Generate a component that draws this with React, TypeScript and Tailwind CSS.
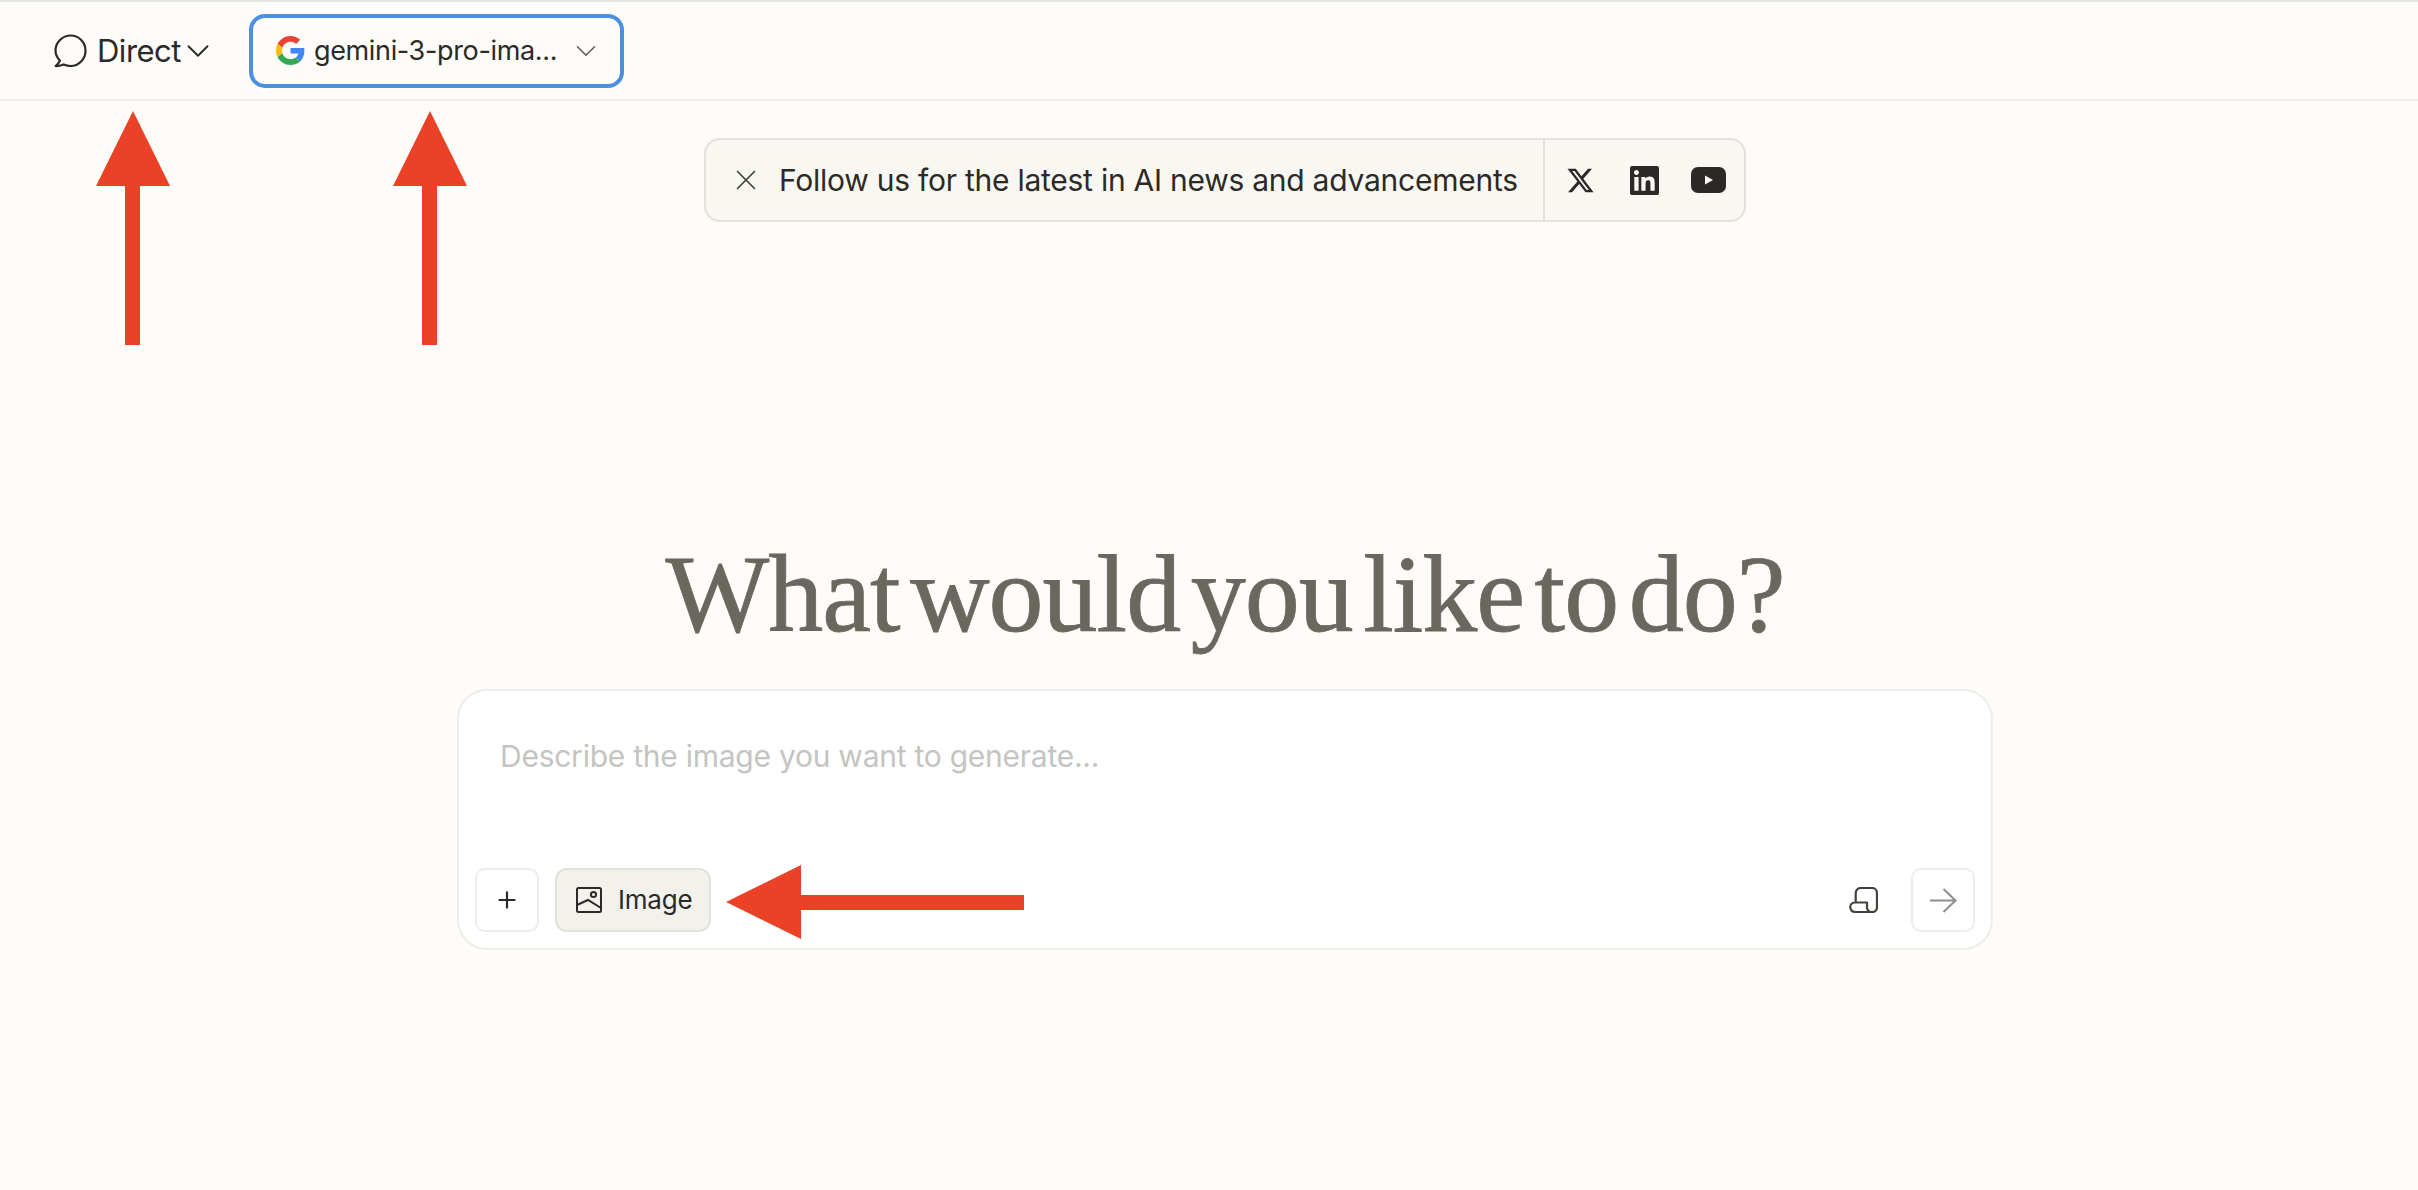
import React from 'react';
import { ChevronDown, Plus, X } from 'lucide-react';
import { FaXTwitter } from 'react-icons/fa6';
import { SiLinkedin } from 'react-icons/si';

const ChatBubble = () => (
  <svg width="33" height="34" viewBox="0 0 33 34" fill="none" stroke="#2b2a27" strokeWidth="2.2" strokeLinejoin="round">
    <path d="M6 26.5C3.2 23.8 1.5 20.4 1.5 16.7 1.5 8.4 8.4 1.5 16.7 1.5S31.5 8.4 31.5 16.7 24.8 32 16.7 32C14.2 32 11.8 31.4 9.7 30.4 7.5 31.7 4.6 32.2 1.6 32 3.6 30.4 5 28.6 6 26.5Z" />
  </svg>
);

const GoogleLogo = () => (
  <svg width="29" height="29" viewBox="0 0 48 48">
    <path fill="#EA4335" d="M24 9.5c3.54 0 6.71 1.22 9.21 3.6l6.85-6.85C35.9 2.38 30.47 0 24 0 14.62 0 6.51 5.38 2.56 13.22l7.98 6.19C12.43 13.72 17.74 9.5 24 9.5z" />
    <path fill="#4285F4" d="M46.98 24.55c0-1.57-.15-3.09-.38-4.55H24v9.02h12.94c-.58 2.96-2.26 5.48-4.78 7.18l7.73 6c4.51-4.18 7.09-10.36 7.09-17.65z" />
    <path fill="#FBBC05" d="M10.53 28.59c-.48-1.45-.76-2.99-.76-4.59s.27-3.14.76-4.59l-7.98-6.19C.92 16.46 0 20.12 0 24c0 3.88.92 7.54 2.56 10.78l7.97-6.19z" />
    <path fill="#34A853" d="M24 48c6.48 0 11.93-2.13 15.89-5.81l-7.73-6c-2.15 1.45-4.92 2.3-8.16 2.3-6.26 0-11.57-4.22-13.47-9.91l-7.98 6.19C6.51 42.62 14.62 48 24 48z" />
  </svg>
);

const YoutubeIcon = () => (
  <svg width="35" height="26" viewBox="0 0 35 26">
    <rect width="35" height="26" rx="7" fill="#2b2825" />
    <path d="M14 8.5 22 13 14 17.5Z" fill="#f9f7f1" />
  </svg>
);

const ImageIcon = () => (
  <svg width="26" height="26" viewBox="0 0 26 26" fill="none" stroke="#2b2a27" strokeWidth="2">
    <rect x="1" y="1" width="24" height="24" rx="1.5" />
    <circle cx="17.5" cy="7.5" r="2.6" />
    <path d="M1 18 12 13 25 21" />
  </svg>
);

const ScrollIcon = () => (
  <svg width="29" height="26" viewBox="0 0 29 26" fill="none" stroke="#45423d" strokeWidth="2.2" strokeLinejoin="round">
    <path d="M6.7 15.5V6a5 5 0 0 1 5-5H23a5 5 0 0 1 5 5v14.5a4.5 4.5 0 0 1-4.5 4.5H6a4.7 4.7 0 0 1 0-9.5H18v5a4.5 4.5 0 0 0 4.5 4.5" />
  </svg>
);

const ArrowIcon = () => (
  <svg width="27" height="25" viewBox="0 0 27 25" fill="none" stroke="#8f8e8b" strokeWidth="2">
    <path d="M0 12.5H25.5M13.5 1 25.5 12.5 13.5 24" />
  </svg>
);

// red annotation arrows drawn over the page
const Annotations = () => (
  <svg className="absolute left-0 top-0 pointer-events-none" width="2418" height="1190" fill="#eb4126">
    <path d="M133 111 170 186H140V345H125V186H96Z" />
    <path d="M430 111 467 186H437V345H422V186H393Z" />
    <path d="M726 902 801 865V895H1024V910H801V939Z" />
  </svg>
);

export default function App() {
  return (
    <div
      className="relative h-[1190px] overflow-hidden bg-[#fdfcf9] text-[#2b2a27]"
      style={{ fontFamily: 'Inter, sans-serif' }}
    >
      <header className="flex h-[101px] items-center border-t-2 border-b-2 border-t-[#e4e4e0] border-b-[#eeede9] pl-[54px]">
        <div className="flex items-center">
          <ChatBubble />
          <span className="ml-[10px] text-[31px] leading-none tracking-[-0.5px]">Direct</span>
          <ChevronDown className="-ml-[2px] text-[#2b2a27]" size={38} strokeWidth={1.2} />
        </div>
        <div className="ml-[32px] flex h-[74px] w-[375px] items-center rounded-[16px] border-4 border-[#4a8fe0] pl-[23px]">
          <GoogleLogo />
          <span className="ml-[9px] w-[255px] text-[27px] leading-none tracking-[-0.35px] whitespace-nowrap">gemini-3-pro-ima...</span>
          <ChevronDown className="text-[#5f5e5a]" size={34} strokeWidth={1.1} />
        </div>
      </header>

      <main className="flex flex-col items-center pl-8">
        <div className="mt-[37px] flex h-[84px] w-[1042px] items-center rounded-[16px] border-2 border-[#e3e1dc] bg-[#f9f7f1]">
          <X className="ml-[23px] text-[#3a3935]" size={34} strokeWidth={1.1} />
          <span className="ml-[16px] w-[764px] text-[30px] leading-none tracking-[-0.25px] whitespace-nowrap">
            Follow us for the latest in AI news and advancements
          </span>
          <div className="flex h-full flex-1 items-center border-l-2 border-[#e3e1dc] pl-[21px] text-[#2b2825]">
            <FaXTwitter size={29} />
            <SiLinkedin className="ml-[35px]" size={29} />
            <div className="ml-[32px]">
              <YoutubeIcon />
            </div>
          </div>
        </div>

        <h1
          className="mt-[307px] text-[110px] leading-[130px] tracking-[-1px] [word-spacing:-16px] [-webkit-text-stroke:0.8px_#6a675f] text-[#6a675f]"
          style={{ fontFamily: '"Liberation Serif", serif' }}
        >
          What would you like to do?
        </h1>

        <div className="mt-[30px] flex h-[261px] w-[1536px] flex-col justify-between rounded-[30px] border-2 border-[#eeede9] bg-white px-4 pb-4">
          <div className="pl-[25px] pt-[45px] text-[30px] leading-10 tracking-[-0.25px] text-[#c4c4c2]">Describe the image you want to generate...</div>
          <div className="flex items-center">
            <button className="flex h-16 w-16 items-center justify-center rounded-[10px] border-2 border-[#eeede9]">
              <Plus size={26} strokeWidth={2} />
            </button>
            <button className="ml-4 flex h-16 w-[156px] items-center rounded-[12px] border-2 border-[#e3e1dc] bg-[#f3f1ec] pl-[19px]">
              <ImageIcon />
              <span className="ml-4 text-[26px] leading-none tracking-[-0.2px]">Image</span>
            </button>
            <div className="ml-auto">
              <ScrollIcon />
            </div>
            <button className="ml-[33px] flex h-16 w-16 items-center justify-center rounded-[10px] border-2 border-[#eeede9]">
              <ArrowIcon />
            </button>
          </div>
        </div>
      </main>

      <Annotations />
    </div>
  );
}
